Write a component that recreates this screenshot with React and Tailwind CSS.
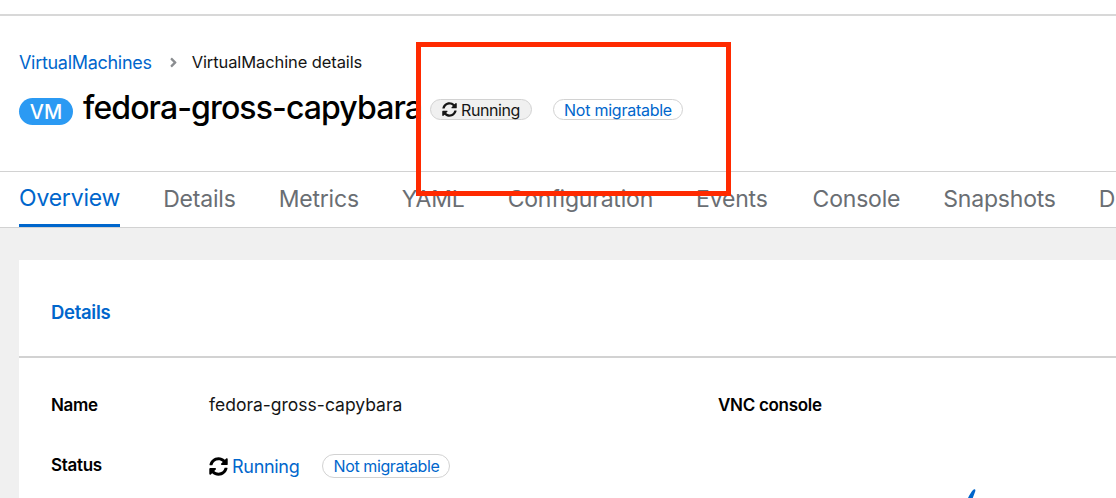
import React from 'react';
import { FaAngleRight, FaSyncAlt } from 'react-icons/fa';

const TABS = ['Overview', 'Details', 'Metrics', 'YAML', 'Configuration', 'Events', 'Console', 'Snapshots', 'Diagnostics'];

const App = () => {
    return (
        <div className="relative h-[498px] w-[1116px] overflow-hidden bg-white font-['Inter','Noto_Sans',sans-serif] text-black">
            {/* Masthead edge */}
            <div className="h-[16px] border-b-2 border-[#d8d8d8] bg-white" />

            {/* Breadcrumb and title */}
            <div className="h-[155px] pl-[19px] pt-[36px]">
                <div className="flex h-[20px] items-center">
                    <span className="text-[18px] tracking-[-0.3px] text-[#0066cc]">VirtualMachines</span>
                    <FaAngleRight className="ml-[14px] mr-[11px] text-[15px] text-[#8a8d90]" />
                    <span className="text-[16.5px] tracking-[-0.1px] text-[#151515]">VirtualMachine details</span>
                </div>
                <div className="mt-[18px] flex h-[40px] items-center">
                    <span className="mt-[3px] flex h-[27px] w-[54px] shrink-0 items-center justify-center rounded-full bg-[#2b9af3] text-[20px] font-medium text-white">VM</span>
                    <h1 className="mb-[4px] ml-[10px] w-[339px] shrink-0 whitespace-nowrap text-[32px] font-medium leading-[40px] tracking-[-0.9px]">fedora-gross-capybara</h1>
                    <span className="mb-[1px] ml-[8px] flex h-[21px] w-[102px] shrink-0 items-center justify-center gap-[4px] rounded-full border border-[#d2d2d2] bg-[#f0f0f0] text-[16px] tracking-[-0.4px] text-[#151515]">
                        <FaSyncAlt className="text-[15px]" />
                        Running
                    </span>
                    <span className="mb-[1px] ml-[21px] flex h-[21px] w-[130px] shrink-0 items-center justify-center rounded-full border border-[#d2d2d2] bg-white text-[16px] tracking-[-0.25px] text-[#0066cc]">Not migratable</span>
                </div>
            </div>

            {/* Tabs */}
            <div className="flex h-[57px] gap-[43px] overflow-hidden border-y border-[#d2d2d2] pl-[19px]">
                {TABS.map((tab, index) => (
                    <div
                        key={tab}
                        className={`flex h-[55px] shrink-0 items-center text-[23px] tracking-[-0.2px] ${index === 0 ? 'border-b-[3px] border-[#0066cc] text-[#0066cc]' : 'text-[#6a6e73]'} ${index === 6 ? 'ml-[2px]' : ''}`}
                    >
                        {tab}
                    </div>
                ))}
            </div>

            {/* Page body */}
            <div className="h-[270px] bg-[#f0f0f0] pl-[19px] pt-[32px]">
                <div className="h-[240px] bg-white">
                    <div className="flex h-[98px] items-center border-b-2 border-[#d2d2d2] pl-[32px] pt-[10px] text-[18.5px] font-semibold tracking-[-0.3px] text-[#0066cc]">
                        Details
                    </div>
                    <div className="relative flex pl-[32px] pt-[35px] text-[17px]">
                        <div className="grid w-[667px] grid-cols-[158px_1fr] gap-y-[36px]">
                            <div className="h-[24px] font-semibold leading-[24px] tracking-[-0.3px]">Name</div>
                            <div className="text-[17.5px] leading-[24px] text-[#151515]">fedora-gross-capybara</div>
                            <div className="h-[24px] font-semibold leading-[24px] tracking-[-0.3px]">Status</div>
                            <div className="flex items-center">
                                <FaSyncAlt className="text-[19px]" />
                                <span className="ml-[4px] text-[18px] tracking-[-0.3px] text-[#0066cc]">Running</span>
                                <span className="mb-[1px] ml-[23px] flex h-[24px] w-[128px] items-center justify-center rounded-full border border-[#d2d2d2] text-[16px] tracking-[-0.4px] text-[#0066cc]">Not migratable</span>
                            </div>
                        </div>
                        <div className="font-semibold leading-[24px] tracking-[-0.3px]">VNC console</div>
                        {/* Top of the graphic cut off by the window edge */}
                        <svg className="absolute left-[945px] top-[130px] h-[12px] w-[16px]" viewBox="0 0 16 12">
                            <path d="M3 12 C5 8 7 4 9 2 C11 0 12 2 11 4 L8 12 Z" fill="#0066cc" />
                        </svg>
                    </div>
                </div>
            </div>

            {/* Red highlight drawn over the screenshot */}
            <div className="absolute left-[416px] top-[42px] h-[154px] w-[315px] border-[5px] border-[#ff2a00]" />
        </div>
    );
};

export default App;
